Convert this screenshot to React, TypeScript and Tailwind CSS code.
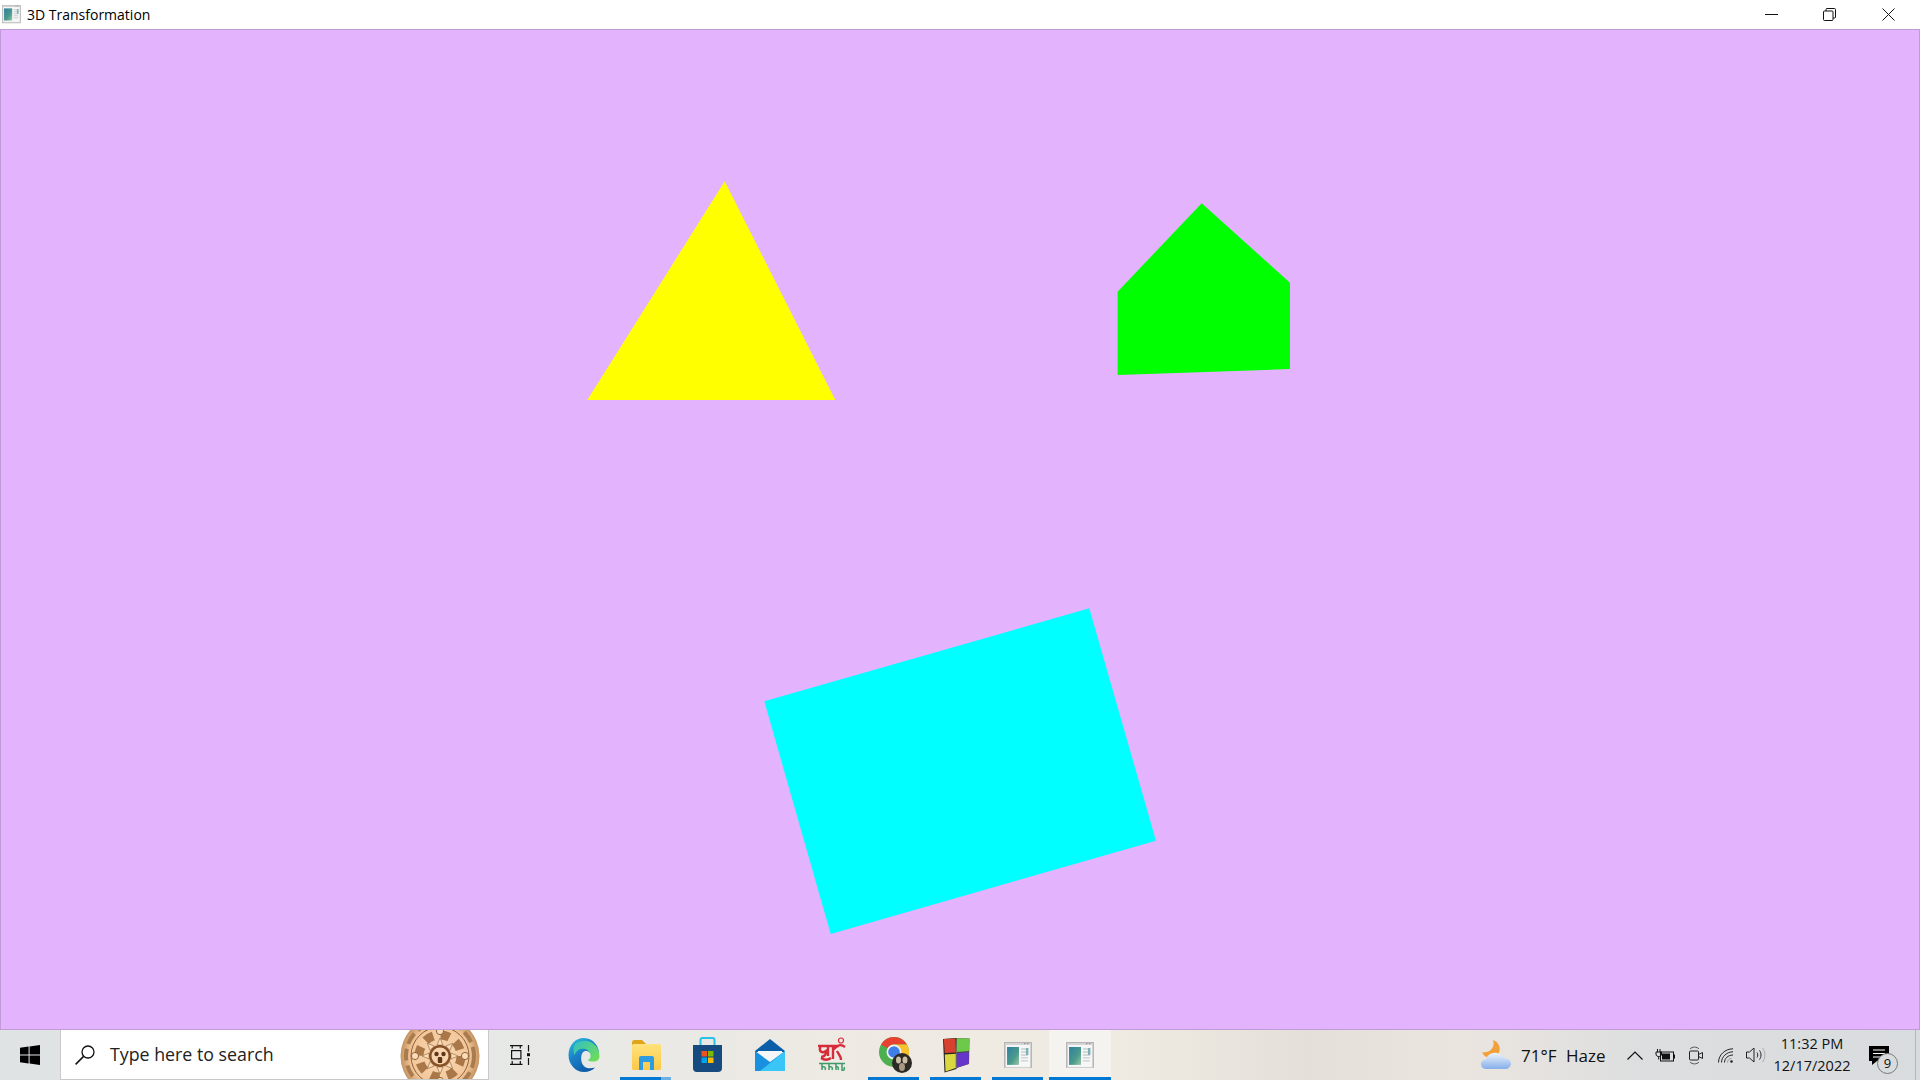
import React from 'react';

const uiFont = "[font-family:'Open_Sans','Noto_Sans',sans-serif]";

const AppIcon: React.FC<{ size?: number; id: string }> = ({ size = 28, id }) => (
  <svg width={size} height={size * 0.96} viewBox="0 0 28 27">
    <defs>
      <linearGradient id={id} x1="0" y1="0" x2="1" y2="1">
        <stop offset="0" stopColor="#2f7fa0" />
        <stop offset="0.6" stopColor="#4a9a8c" />
        <stop offset="1" stopColor="#9cc7a8" />
      </linearGradient>
    </defs>
    <rect x="0.5" y="0.5" width="27" height="26" fill="#d4d4d4" stroke="#b4b4b4" />
    <rect x="2" y="3" width="24" height="22" fill="#f7f7f7" />
    <rect x="3" y="5" width="12" height="18" fill={`url(#${id})`} />
    <path d="M17 7h7M17 10h7M17 13h7M17 16h7M17 19h7" stroke="#c6cfd0" strokeWidth="1.4" />
    <rect x="22" y="6" width="2.5" height="7" fill="#7fb0b6" />
    <path d="M20 1.7h1.5M23 1.7h1.5" stroke="#888" />
  </svg>
);

const WindowsLogo = () => (
  <svg width="20" height="20" viewBox="0 0 20 20" fill="#000">
    <path d="M0 2.8 8.6 1.6V9.5H0Z" />
    <path d="M9.6 1.4 20 0V9.5H9.6Z" />
    <path d="M0 10.5H8.6V18.4L0 17.2Z" />
    <path d="M9.6 10.5H20V20L9.6 18.6Z" />
  </svg>
);

const SearchGlyph = () => (
  <svg width="20" height="20" viewBox="0 0 20 20" fill="none" stroke="#111" strokeWidth="1.3">
    <circle cx="13" cy="7" r="6" />
    <path d="M8.6 11.4 0.6 19.4" strokeWidth="1.5" />
  </svg>
);

const Medallion = () => (
  <svg width="80" height="50" viewBox="0 -14 80 50" className="shrink-0">
    <defs>
      <radialGradient id="med" cx="0.5" cy="0.5" r="0.5">
        <stop offset="0" stopColor="#fad9b4" />
        <stop offset="0.75" stopColor="#f2c69a" />
        <stop offset="1" stopColor="#c5935f" />
      </radialGradient>
    </defs>
    <circle cx="40" cy="12" r="39.5" fill="url(#med)" />
    <circle cx="40" cy="12" r="34" fill="none" stroke="#a97c50" strokeWidth="4" strokeDasharray="12 5" />
    <circle cx="40" cy="12" r="29" fill="none" stroke="#8f6238" strokeWidth="1" />
    <circle cx="40" cy="12" r="21" fill="none" stroke="#a97748" strokeWidth="9" strokeDasharray="9 7.500" />
    {[0, 45, 90, 135, 180, 225, 270, 315].map((a) => (
      <polygon
        key={a}
        points="40,-6 43,1 37,1"
        fill="#fbdcb8"
        stroke="#8f6238"
        strokeWidth="0.6"
        transform={`rotate(${a} 40 12)`}
      />
    ))}
    {[0, 90, 180, 270].map((a) => (
      <circle
        key={a}
        cx={40 + 25 * Math.cos((a * Math.PI) / 180)}
        cy={12 + 25 * Math.sin((a * Math.PI) / 180)}
        r="3.600"
        fill="#fbdcb8"
        stroke="#8f6238"
      />
    ))}
    <circle cx="40" cy="12" r="11" fill="#85522a" />
    <circle cx="40" cy="12" r="8.500" fill="#f6d4ad" />
    <circle cx="36.500" cy="10" r="2.200" fill="#5e3518" />
    <circle cx="43.500" cy="10" r="2.200" fill="#5e3518" />
    <rect x="37.800" y="13" width="4.400" height="6" rx="1" fill="#5e3518" />
  </svg>
);

const TaskView = () => (
  <svg width="21" height="20" viewBox="0 0 21 20" fill="none" stroke="#111" strokeWidth="1.2" className="mr-[4px]">
    <path d="M0 .6H12.500M2.200 .6V3.600M10.300 .6V3.600" />
    <rect x="1.600" y="5.600" width="9.300" height="8.200" />
    <path d="M0 19.400H12.500M2.200 16V19.400M10.300 16V19.400" />
    <path d="M18.500 0V6.500M18.500 13V20" />
    <rect x="17" y="8.200" width="3" height="3" fill="#111" stroke="none" />
  </svg>
);

const EdgeIcon = () => (
  <svg width="32" height="36" viewBox="0 0 32 36">
    <defs>
      <linearGradient id="edgeA" x1="0" y1="0" x2="0.6" y2="1">
        <stop offset="0" stopColor="#2cc3d8" />
        <stop offset="0.5" stopColor="#1a80c8" />
        <stop offset="1" stopColor="#0c5aa6" />
      </linearGradient>
      <linearGradient id="edgeB" x1="0" y1="0" x2="1" y2="0.8">
        <stop offset="0" stopColor="#2fc0c8" />
        <stop offset="1" stopColor="#6fdc58" />
      </linearGradient>
    </defs>
    <path d="M16 1C7 1 0.500 8.500 0.500 18S7.500 35 16 35c4.500 0 8.500-1.600 11-4.500-6 2-12 .5-13.500-6C12.500 19 14 15 17 14c4 0 6 2 6.500 5H31c1-9-5.500-18-15-18Z" fill="url(#edgeA)" />
    <path d="M7 7c6-5 16-4 21 2 2.600 3 3.600 7 3.400 11-.2 3-3 4.600-6 4.600-2.600 0-4.600-.6-5.600-1.600 2.200-1 3.200-3 2.600-5.600C21.400 13 17 11 12.500 12c-3 .7-5 3-6 6C5 14 5 10 7 7Z" fill="url(#edgeB)" />
  </svg>
);

const ExplorerIcon = () => (
  <svg width="29" height="32" viewBox="0 0 29 32">
    <defs>
      <linearGradient id="fold" x1="0" y1="0" x2="0" y2="1">
        <stop offset="0" stopColor="#ffe27a" />
        <stop offset="1" stopColor="#fbc94a" />
      </linearGradient>
    </defs>
    <path d="M0 3.500Q0 1 2 1H10L13.500 4.500V7H0Z" fill="#dfa31c" />
    <rect x="0" y="5" width="29" height="26" rx="1.500" fill="url(#fold)" />
    <path d="M7 31V19Q7 17 9 17H20Q22 17 22 19V31H18V23H11V31Z" fill="#2f9be0" />
  </svg>
);

const StoreIcon = () => (
  <svg width="29" height="36" viewBox="0 0 29 36" className="mr-[2px]">
    <path d="M7.500 8V3Q7.500 1 9.500 1H19.500Q21.500 1 21.500 3V8" fill="none" stroke="#27c0e8" strokeWidth="2" />
    <path d="M0 8H29V31Q29 35 25 35H4Q0 35 0 31Z" fill="#174a7e" />
    <rect x="8.500" y="14" width="5.500" height="5.500" fill="#f0521f" />
    <rect x="15" y="14" width="5.500" height="5.500" fill="#7db900" />
    <rect x="8.500" y="20.500" width="5.500" height="5.500" fill="#00a2ee" />
    <rect x="15" y="20.500" width="5.500" height="5.500" fill="#ffb900" />
  </svg>
);

const MailIcon = () => (
  <svg width="30" height="34" viewBox="0 0 30 34">
    <path d="M0 13 15 1 30 13V14H0Z" fill="#0a5fa8" />
    <path d="M3 13H27V22L15 29 3 22Z" fill="#f4f6f8" />
    <path d="M0 13 15 24 30 13V33H0Z" fill="#1890df" />
    <path d="M30 13V33H5Z" fill="#39c5f6" />
  </svg>
);

// red and green scribble logo
const BanglaLogo = () => (
  <svg width="30" height="36" viewBox="0 0 30 36" fill="none">
    <path d="M1 9H22M4 9C1 14 5 17 9 14C10 17 7 20 4 20M11 9V19M16 9V22M16 13C20 9 23 6 28 10M20 14C22 18 24 19 24 23M4 21C7 23 11 23 14 21" stroke="#d72b3a" strokeWidth="2.400" />
    <circle cx="24" cy="3.500" r="2.500" stroke="#d72b3a" strokeWidth="1.200" />
    <path d="M2 26.500H28M5 26.500V33M5 30C8 29 9 31 8 33M12 26.500V33M12 30C15 29 16 31 15 33M19 26.500V33M19 30C21 29 22 31 21 33M25 26.500V33C27 34 28 32 27 30" stroke="#3f9a6a" strokeWidth="1.500" />
  </svg>
);

const ChromeIcon = () => (
  <svg width="33" height="36" viewBox="0 0 33 36">
    <circle cx="15" cy="15" r="15" fill="#4caf50" />
    <path d="M15 0A15 15 0 0 1 28 7.500H15A7.500 7.500 0 0 0 8.500 11.300L2 7.500A15 15 0 0 1 15 0Z" fill="#e8412f" />
    <path d="M28 7.500A15 15 0 0 1 17 30L22 15A7 7 0 0 0 15 7.500Z" fill="#fbc02d" />
    <circle cx="15" cy="15" r="7.500" fill="#f4f4f4" />
    <circle cx="15" cy="15" r="5.800" fill="#3f7ee8" />
    <circle cx="23" cy="26" r="10" fill="#2d2a26" />
    <ellipse cx="19.500" cy="23" rx="2.500" ry="3.500" fill="#cdbfa6" />
    <ellipse cx="26" cy="23" rx="2.500" ry="3.500" fill="#cdbfa6" />
    <ellipse cx="23" cy="30" rx="3" ry="4" fill="#a89a82" />
  </svg>
);

const ColorsIcon = () => (
  <svg width="28" height="36" viewBox="0 0 28 36">
    <path d="M1 2 14 1 14.500 32 2.500 35.500Z" fill="#2a2420" />
    <path d="M14 1 27.500 1.500 27 27 14.500 31Z" fill="#4a4a44" />
    <path d="M1.800 2 13.500 1.500 14 15.500 2.800 16Z" fill="#d8402f" />
    <path d="M14.800 1.200 27.500 1.500 26.800 14 14.800 15Z" fill="#6cc94a" />
    <path d="M2.800 17.500 13.800 16.700V31L3.500 34.500Z" fill="#d9d840" />
    <path d="M14.800 16.200 26.800 15V26.800L14.800 30.800Z" fill="#6636cc" />
  </svg>
);

const TaskCell: React.FC<{ children: React.ReactNode; line?: 'on' | 'stack' | 'active' }> = ({ children, line }) => (
  <div className={`relative flex h-full w-[62px] shrink-0 items-center justify-center ${line === 'active' ? 'bg-[#f4f3ef]' : ''}`}>
    {children}
    {line === 'on' && <div className="absolute bottom-0 left-[5px] h-[3px] w-[51px] bg-[#0078d4]" />}
    {line === 'active' && <div className="absolute inset-x-0 bottom-0 h-[3px] bg-[#0078d4]" />}
    {line === 'stack' && (
      <div className="absolute bottom-0 left-[5px] flex h-[3px] w-[51px]">
        <div className="w-[41px] bg-[#0078d4]" />
        <div className="flex-1 bg-[#6cb0e6]" />
      </div>
    )}
  </div>
);

const WeatherIcon = () => (
  <svg width="30" height="30" viewBox="0 0 30 30" className="shrink-0">
    <defs>
      <linearGradient id="cloud" x1="0" y1="0" x2="0" y2="1">
        <stop offset="0" stopColor="#eef5fd" />
        <stop offset="1" stopColor="#86aeea" />
      </linearGradient>
    </defs>
    <path d="M12 0C21 3 21 15 12 18 7 19 3 16 1 12.500 5 12.500 9 11.500 11 8.500 13 5.500 13 3 12 0Z" fill="#f2a03a" />
    <path d="M6 29C2 29 0 27 0 24 0 21 2 19.500 5 19.500 6 15 11 12 16 13 20 14 22 16 22 18 26 18 30 20 30 23.500 30 27 27 29 24 29Z" fill="url(#cloud)" />
  </svg>
);

const Chevron = () => (
  <svg width="16" height="9" viewBox="0 0 16 9" fill="none" stroke="#111" strokeWidth="1.200" className="shrink-0">
    <path d="M.5 8.500 8 1l7.500 7.500" />
  </svg>
);

const BatteryIcon = () => (
  <svg width="20" height="13" viewBox="0 0 20 13" fill="none" stroke="#111" className="ml-[12px] shrink-0">
    <path d="M2.500 0V3M5 0V3M1 3H6.500V5C6.500 7 5 7.500 3.700 7.500 2.500 7.500 1 7 1 5ZM3.700 7.500V10.500" strokeWidth="1" />
    <rect x="5.500" y="3" width="13" height="9" />
    <rect x="7" y="4.500" width="8" height="6" fill="#111" stroke="none" />
    <rect x="19" y="5.500" width="1" height="4" fill="#111" stroke="none" />
  </svg>
);

const CameraIcon = () => (
  <svg width="14" height="19" viewBox="0 0 14 19" fill="none" stroke="#222" strokeWidth="1" className="ml-[14px] shrink-0">
    <rect x=".5" y="5" width="9" height="9" rx="1" />
    <path d="M9.500 8.500 13.500 6.500V12.500L9.500 10.500" />
    <path d="M1 3C3 .5 8 .5 10 3M1 16C3 18.500 8 18.500 10 16" stroke="#555" />
  </svg>
);

const WifiIcon = () => (
  <svg width="16" height="15" viewBox="0 0 16 15" fill="none" stroke="#222" strokeWidth="1" className="ml-[15px] shrink-0">
    <path d="M.5 14.500C.5 7 7 .8 15 .8" />
    <path d="M3.500 14.500C3.500 9 8.500 3.800 15 3.800" />
    <path d="M6.500 14.500C6.500 10.500 10 7 15 7" />
    <path d="M9.500 14.500C9.500 12.500 11 10.300 13.500 10.300" stroke="#999" />
    <circle cx="13.500" cy="13.500" r="1.300" fill="#222" stroke="none" />
  </svg>
);

const SpeakerIcon = () => (
  <svg width="20" height="16" viewBox="0 0 20 16" fill="none" stroke="#222" strokeWidth="1" className="ml-[12px] shrink-0">
    <path d="M.5 5H3.500L8 1V15L3.500 11H.5Z" />
    <path d="M11 5.500C12 7 12 9 11 10.500" />
    <path d="M13.500 3.500C15.500 6 15.500 10 13.500 12.500" />
    <path d="M16.500 1C19.700 5 19.700 11 16.500 15" stroke="#aaa" />
  </svg>
);

export default function App() {
  return (
    <div className={`flex h-screen w-full flex-col overflow-hidden bg-white ${uiFont}`}>
      {/* title bar */}
      <div className="flex h-[29px] shrink-0 items-center bg-white">
        <div className="ml-[2px]">
          <AppIcon size={19} id="titleIcon" />
        </div>
        <span className="ml-[6px] text-[14px] leading-none text-black">3D Transformation</span>
        <div className="ml-auto flex h-full items-center">
          <svg width="13" height="1" className="mr-[45px]"><rect width="13" height="1" fill="#111" /></svg>
          <svg width="13" height="13" viewBox="0 0 13 13" fill="none" stroke="#111" className="mr-[46px]">
            <rect x=".5" y="3" width="9.500" height="9.500" rx="1" />
            <path d="M3 3V1.500Q3 .5 4 .5H11.500Q12.500 .5 12.500 1.500V9Q12.500 10 11.500 10H10" />
          </svg>
          <svg width="13" height="13" viewBox="0 0 13 13" stroke="#111" className="mr-[25px]">
            <path d="M.5 .5 12.500 12.500M12.500 .5 .5 12.500" />
          </svg>
        </div>
      </div>

      {/* gl canvas */}
      <div className="h-[1001px] shrink-0 overflow-hidden border border-[#c19bd8] bg-[#e4b3fe]">
        <svg width="1918" height="999" viewBox="1 30 1918 999" className="block">
          <polygon points="724.700,181.300 835.300,400 587.300,400" fill="#ffff00" />
          <polygon points="1201.700,203.200 1290,282.700 1290,369 1117.600,375 1117.600,291.700" fill="#00ff00" />
          <polygon points="1089.300,608.300 1156,840.700 830.700,934 764.300,701.300" fill="#00ffff" />
        </svg>
      </div>

      {/* taskbar */}
      <div className="flex h-[50px] shrink-0 items-center bg-[linear-gradient(90deg,#dfe3e4_0%,#e6e8e7_25%,#eeeae3_45%,#f0ebe2_58%,#e4dfd8_68%,#ebe5df_76%,#dcdedf_86%,#d9dcde_100%)] text-[#111]">
        <div className="flex h-full w-[60px] shrink-0 items-center justify-center">
          <WindowsLogo />
        </div>
        <div className="flex h-full w-[429px] shrink-0 items-center overflow-hidden border-x border-b border-[#c9c9c9] bg-white pl-[14px] pr-[8px]">
          <SearchGlyph />
          <span className="ml-[15px] mt-[1px] text-[17.800px] leading-none text-[#222]">Type here to search</span>
          <div className="ml-auto">
            <Medallion />
          </div>
        </div>
        <div className="flex h-full pl-[2px]">
          <TaskCell><TaskView /></TaskCell>
          <TaskCell><EdgeIcon /></TaskCell>
          <TaskCell line="stack"><ExplorerIcon /></TaskCell>
          <TaskCell><StoreIcon /></TaskCell>
          <TaskCell><MailIcon /></TaskCell>
          <TaskCell><BanglaLogo /></TaskCell>
          <TaskCell line="on"><div className="ml-[3px]"><ChromeIcon /></div></TaskCell>
          <TaskCell line="on"><ColorsIcon /></TaskCell>
          <TaskCell line="on"><AppIcon id="appA" /></TaskCell>
          <TaskCell line="active"><AppIcon id="appB" /></TaskCell>
        </div>

        <div className="ml-auto flex h-full w-[439px] shrink-0 items-center">
          <WeatherIcon />
          <span className="ml-[10px] w-[45px] text-[17px] leading-none">71°F</span>
          <span className="w-[61px] text-[17px] leading-none">Haze</span>
          <Chevron />
          <BatteryIcon />
          <CameraIcon />
          <WifiIcon />
          <SpeakerIcon />
          <div className="ml-[6px] flex w-[80px] shrink-0 flex-col items-center gap-[6px] text-[14.500px] leading-[16px]">
            <span>11:32 PM</span>
            <span>12/17/2022</span>
          </div>
          <div className="relative ml-[17px] h-[19px] w-[30px] shrink-0">
            <svg width="20" height="19" viewBox="0 0 20 19">
              <path d="M0 0H20V15H8L3 19V15H0Z" fill="#000" />
              <path d="M4 4H16M4 7.500H16M4 11H12" stroke="#fff" strokeWidth="1" />
            </svg>
            <div className="absolute left-[8px] top-[7px] flex h-[21px] w-[21px] items-center justify-center rounded-full border border-[#777] bg-[#d9dcde] text-[13px] leading-none">
              9
            </div>
          </div>
          <div className="ml-[16px] h-full w-px bg-[#b5b7b9]" />
        </div>
      </div>
    </div>
  );
}
